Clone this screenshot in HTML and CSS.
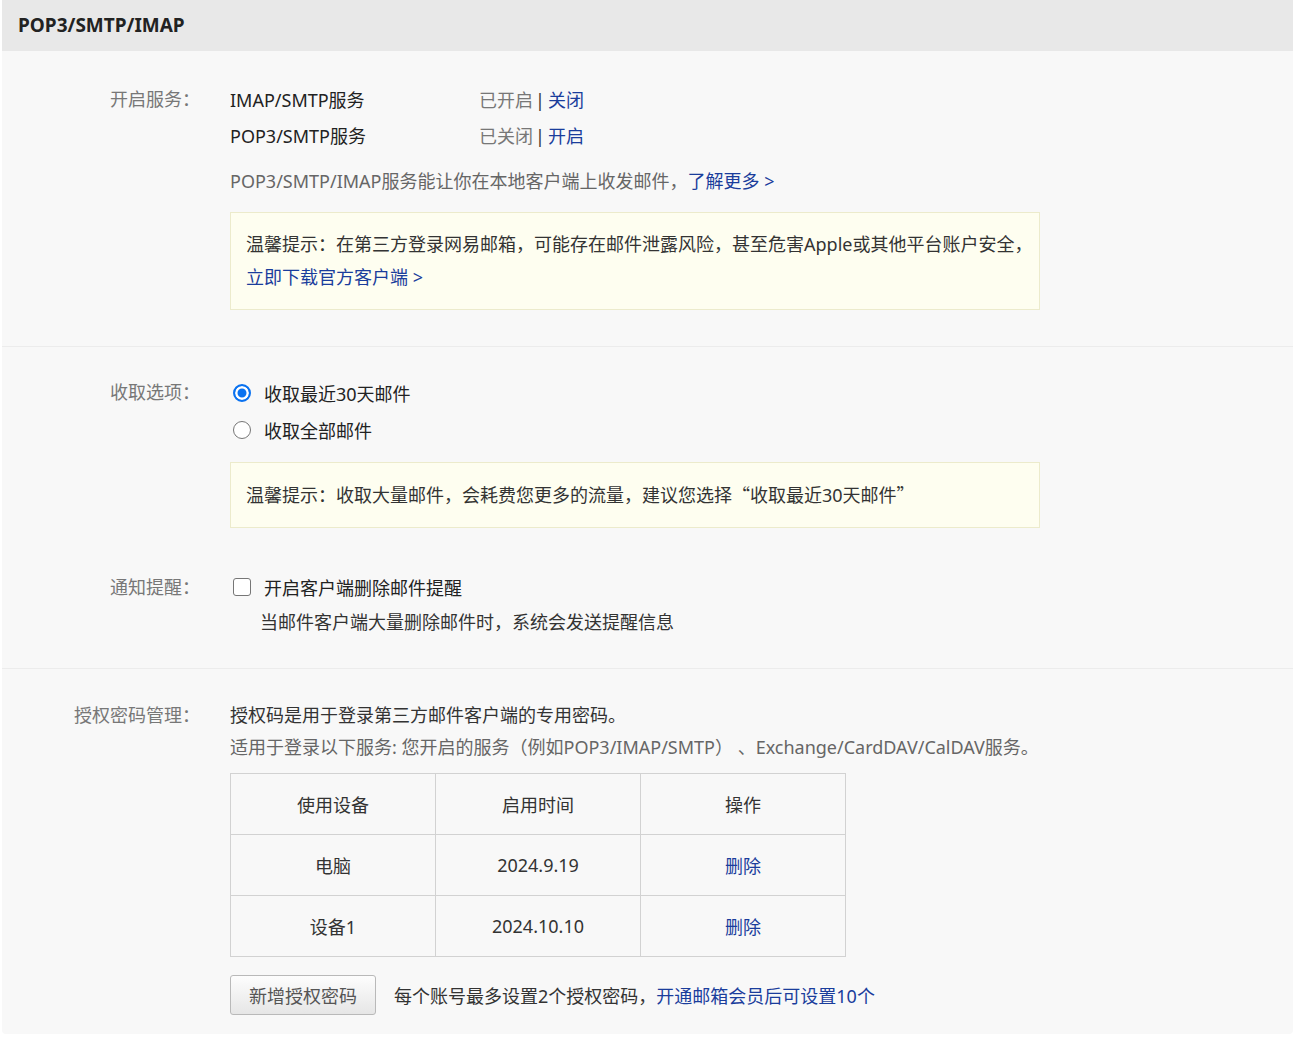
FILE: index.html
```html
<!DOCTYPE html>
<html lang="zh-CN">
<head>
<meta charset="utf-8">
<title>POP3/SMTP/IMAP</title>
<link rel="stylesheet" href="styles.css">
</head>
<body>
<div class="panel">
  <div class="panel-head">POP3/SMTP/IMAP</div>

  <div class="section sec-service">
    <div class="row">
      <div class="label">开启服务：</div>
      <div class="content">
        <div class="svc"><span class="svc-name">IMAP/SMTP服务</span><span class="svc-state">已开启<span class="bar">|</span><a class="link">关闭</a></span></div>
        <div class="svc"><span class="svc-name">POP3/SMTP服务</span><span class="svc-state">已关闭<span class="bar">|</span><a class="link">开启</a></span></div>
        <div class="desc">POP3/SMTP/IMAP服务能让你在本地客户端上收发邮件，<a class="link">了解更多 &gt;</a></div>
        <div class="tip tip-1"><span class="nowrap">温馨提示：在第三方登录网易邮箱，可能存在邮件泄露风险，甚至危害Apple或其他平台账户安全，</span><br><a class="link">立即下载官方客户端 &gt;</a></div>
      </div>
    </div>
  </div>

  <div class="section sec-fetch">
    <div class="row">
      <div class="label">收取选项：</div>
      <div class="content">
        <div class="opt"><span class="radio checked"></span><span>收取最近30天邮件</span></div>
        <div class="opt"><span class="radio"></span><span>收取全部邮件</span></div>
        <div class="tip tip-2">温馨提示：收取大量邮件，会耗费您更多的流量，建议您选择<span class="cjk">“</span>收取最近30天邮件<span class="cjk">”</span></div>
      </div>
    </div>
    <div class="row row-notify">
      <div class="label">通知提醒：</div>
      <div class="content">
        <div class="opt"><span class="checkbox"></span><span>开启客户端删除邮件提醒</span></div>
        <div class="notify-desc">当邮件客户端大量删除邮件时，系统会发送提醒信息</div>
      </div>
    </div>
  </div>

  <div class="section sec-auth">
    <div class="row">
      <div class="label label-auth">授权密码管理：</div>
      <div class="content">
        <div class="auth-line">授权码是用于登录第三方邮件客户端的专用密码。</div>
        <div class="auth-line sub">适用于登录以下服务: 您开启的服务（例如POP3/IMAP/SMTP） 、Exchange/CardDAV/CalDAV服务。</div>
        <table class="auth-table">
          <tr><th>使用设备</th><th>启用时间</th><th>操作</th></tr>
          <tr><td>电脑</td><td>2024.9.19</td><td><a class="link">删除</a></td></tr>
          <tr><td>设备1</td><td>2024.10.10</td><td><a class="link">删除</a></td></tr>
        </table>
        <div class="add-row">
          <button class="btn" type="button">新增授权密码</button>
          <span class="add-note">每个账号最多设置2个授权密码，<a class="link">开通邮箱会员后可设置10个</a></span>
        </div>
      </div>
    </div>
  </div>
</div>
</body>
</html>
```

FILE: styles.css
```css
* { box-sizing: border-box; }
html, body {
  margin: 0;
  padding: 0;
  background: #ffffff;
}
body {
  font-family: "Noto Sans", "Noto Sans CJK SC", sans-serif;
  font-size: 18px;
  color: #333;
}
.panel {
  margin-left: 2px;
  width: 1291px;
  background: #f8f8f8;
  border-radius: 0 0 4px 4px;
}
.panel-head {
  height: 51px;
  line-height: 51px;
  padding-left: 16px;
  background: #e8e8e8;
  font-weight: bold;
  font-size: 19px;
  color: #222;
}
.section {
  border-bottom: 1px solid #ececec;
}
.section:last-child { border-bottom: none; }
.sec-service { padding: 31px 0 36px; }
.sec-fetch { padding: 28px 0 29px; }
.sec-auth { padding: 30px 0 19px; }

.row {
  display: flex;
  align-items: flex-start;
}
.label {
  width: 198px;
  flex: none;
  text-align: right;
  color: #777;
  line-height: 34px;
  margin-right: 30px;
}
.content { flex: 1; }
.link { color: #1a3d9c; text-decoration: none; cursor: pointer; }
.nowrap { white-space: nowrap; }
.cjk { font-family: "Noto Sans CJK SC", sans-serif; }

.svc {
  display: flex;
  line-height: 36px;
}
.svc-name { width: 249px; color: #222; }
.svc-state { color: #777; }
.svc-state .bar { color: #333; margin: 0 3px 0 2px; }
.desc {
  margin-top: 9px;
  line-height: 36px;
  color: #666;
}
.tip {
  width: 810px;
  background: #fefef0;
  border: 1px solid #ecebcc;
  padding: 15px 15px;
  line-height: 33px;
  color: #333;
}
.tip-1 { margin-top: 13px; }
.tip-2 { margin-top: 14px; }

.opt {
  display: flex;
  align-items: center;
  height: 36px;
  color: #222;
}
.opt + .opt { margin-top: 1px; }
.radio {
  width: 18px;
  height: 18px;
  border-radius: 50%;
  border: 1.5px solid #767676;
  background: #fff;
  margin: 0 13px 0 3px;
  flex: none;
}
.radio.checked {
  border: 2px solid #0a72f0;
  background: #0a72f0;
  box-shadow: inset 0 0 0 2.5px #fff;
}
.checkbox {
  width: 18px;
  height: 18px;
  border-radius: 3px;
  border: 1.5px solid #767676;
  background: #fff;
  margin: 0 13px 0 3px;
  flex: none;
}
.row-notify { margin-top: 41px; }
.row-notify .label { line-height: 36px; }
.notify-desc {
  padding-left: 30px;
  line-height: 34px;
  color: #333;
}

.label-auth { line-height: 32px; }
.auth-line { line-height: 32px; color: #333; }
.auth-line.sub { color: #666; }
.auth-table {
  margin-top: 10px;
  border-collapse: collapse;
  width: 616px;
  table-layout: fixed;
}
.auth-table th, .auth-table td {
  border: 1px solid #d2d2d2;
  height: 61px;
  text-align: center;
  font-weight: normal;
  color: #333;
  padding: 0;
}
.add-row {
  display: flex;
  align-items: center;
  margin-top: 18px;
}
.btn {
  width: 146px;
  height: 40px;
  font-family: inherit;
  font-size: 18px;
  color: #555;
  border: 1px solid #b9b9b9;
  border-radius: 3px;
  background: linear-gradient(#fdfdfd, #e6e6e6);
  padding: 0;
}
.add-note {
  margin-left: 18px;
  color: #333;
}
```
